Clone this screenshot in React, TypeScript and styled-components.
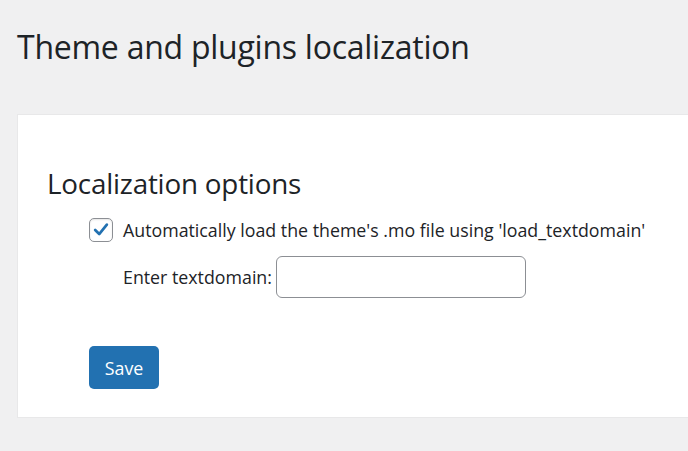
import React, { useState } from 'react';
import styled, { createGlobalStyle } from 'styled-components';

const GlobalStyle = createGlobalStyle`
  html, body {
    margin: 0;
    padding: 0;
    background: #f0f0f1;
    overflow: hidden;
  }
  body {
    font-family: 'Open Sans', 'Noto Sans', sans-serif;
    color: #1d2327;
  }
`;

const Page = styled.div`
  width: 688px;
  height: 451px;
  padding: 0 0 0 17px;
  box-sizing: border-box;
  overflow: hidden;
`;

const Title = styled.h1`
  margin: 0;
  padding: 25px 0 0 0;
  font-size: 32px;
  font-weight: 400;
  line-height: 44px;
  letter-spacing: -0.25px;
  color: #1d2327;
`;

const Panel = styled.section`
  margin-top: 45px;
  width: 720px;
  height: 304px;
  box-sizing: border-box;
  background: #fff;
  border: 1px solid #e8e8e9;
  border-right: none;
  padding: 50px 0 0 29px;
`;

const SectionTitle = styled.h2`
  margin: 0;
  font-size: 27.8px;
  font-weight: 400;
  line-height: 36px;
  letter-spacing: -0.2px;
`;

const Options = styled.div`
  margin: 17px 0 0 42px;
  display: flex;
  flex-direction: column;
  gap: 14px;
`;

const Row = styled.label`
  display: flex;
  align-items: center;
  gap: 10px;
  font-size: 17.8px;
  line-height: 24px;
  cursor: pointer;
`;

const FieldRow = styled.div`
  display: flex;
  align-items: center;
  gap: 4px;
  padding-left: 34px;
  font-size: 17.8px;
`;

const Box = styled.span<{ $checked: boolean }>`
  width: 24px;
  height: 24px;
  box-sizing: border-box;
  border: 1px solid #8c8f94;
  border-radius: 5px;
  background: #fff;
  display: flex;
  align-items: center;
  justify-content: center;
  flex-shrink: 0;
  box-shadow: inset 0 1px 2px rgba(0, 0, 0, 0.1);
  svg {
    visibility: ${props => (props.$checked ? 'visible' : 'hidden')};
  }
`;

const HiddenInput = styled.input`
  display: none;
`;

const TextInput = styled.input`
  width: 250px;
  height: 42px;
  box-sizing: border-box;
  border: 1px solid #8c8f94;
  border-radius: 6px;
  padding: 0 10px;
  font: inherit;
  font-size: 17.8px;
  outline: none;
`;

const SaveButton = styled.button`
  margin: 48px 0 0 42px;
  width: 70px;
  height: 43px;
  border: none;
  border-radius: 5px;
  background: #2271b1;
  color: #fff;
  font-family: 'Open Sans', 'Noto Sans', sans-serif;
  font-size: 17.8px;
  cursor: pointer;
`;

export default function App() {
  const [autoLoad, setAutoLoad] = useState(true);
  const [domain, setDomain] = useState('');

  return (
    <Page>
      <GlobalStyle />
      <Title>Theme and plugins localization</Title>
      <Panel>
        <SectionTitle>Localization options</SectionTitle>
        <Options>
          <Row>
            <HiddenInput
              type="checkbox"
              checked={autoLoad}
              onChange={() => setAutoLoad(!autoLoad)}
            />
            <Box $checked={autoLoad}>
              <svg width="18" height="18" viewBox="0 0 20 20">
                <path
                  d="M3.5 10 L8 14.5 L16.5 4"
                  fill="none"
                  stroke="#2271b1"
                  strokeWidth="3"
                  strokeLinecap="round"
                  strokeLinejoin="round"
                />
              </svg>
            </Box>
            Automatically load the theme's .mo file using 'load_textdomain'
          </Row>
          <FieldRow>
            Enter textdomain:
            <TextInput value={domain} onChange={e => setDomain(e.target.value)} />
          </FieldRow>
        </Options>
        <SaveButton>Save</SaveButton>
      </Panel>
    </Page>
  );
}
